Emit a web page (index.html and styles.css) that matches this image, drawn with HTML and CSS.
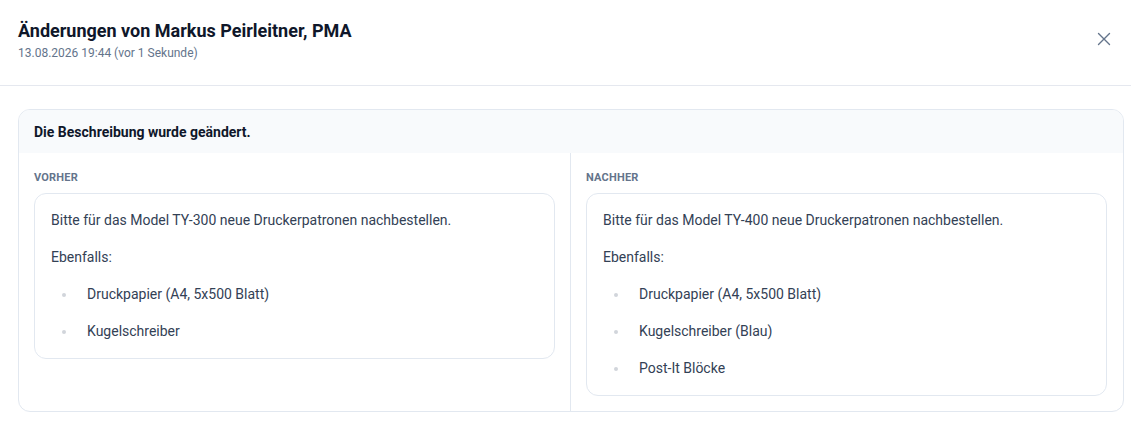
FILE: index.html
```html
<!DOCTYPE html>
<html lang="de">
<head>
<meta charset="utf-8">
<link rel="stylesheet" href="styles.css">
</head>
<body>
<div class="modal">
  <header class="modal-header">
    <div class="titles">
      <h1 class="title">Änderungen von Markus Peirleitner, PMA</h1>
      <div class="subtitle">13.08.2026 19:44 (vor 1 Sekunde)</div>
    </div>
    <button class="close" aria-label="Schließen">
      <svg width="14" height="14" viewBox="0 0 14 14" fill="none" stroke="currentColor" stroke-width="1.4" stroke-linecap="round"><path d="M1.5 1.5l11 11M12.5 1.5l-11 11"/></svg>
    </button>
  </header>
  <div class="modal-body">
    <section class="card">
      <div class="card-head">Die Beschreibung wurde geändert.</div>
      <div class="cols">
        <div class="col">
          <div class="label">Vorher</div>
          <div class="box">
            <p>Bitte für das Model TY-300 neue Druckerpatronen nachbestellen.</p>
            <p>Ebenfalls:</p>
            <ul>
              <li>Druckpapier (A4, 5x500 Blatt)</li>
              <li>Kugelschreiber</li>
            </ul>
          </div>
        </div>
        <div class="col col-right">
          <div class="label">Nachher</div>
          <div class="box">
            <p>Bitte für das Model TY-400 neue Druckerpatronen nachbestellen.</p>
            <p>Ebenfalls:</p>
            <ul>
              <li>Druckpapier (A4, 5x500 Blatt)</li>
              <li>Kugelschreiber (Blau)</li>
              <li>Post-It Blöcke</li>
            </ul>
          </div>
        </div>
      </div>
    </section>
  </div>
</div>
</body>
</html>
```
FILE: styles.css
```css
* { box-sizing: border-box; }
html, body { margin: 0; padding: 0; background: #ffffff; }
body {
  font-family: Roboto, "Liberation Sans", sans-serif;
  color: #0f172a;
}
.modal { width: 1131px; }
.modal-header {
  display: flex;
  justify-content: space-between;
  align-items: flex-start;
  padding: 19px 18px 24px 18px;
  border-bottom: 1px solid #e5e8ef;
}
.title {
  margin: 0;
  font-size: 18px;
  line-height: 24px;
  font-weight: 700;
  color: #0f172a;
}
.subtitle {
  margin-top: 2px;
  font-size: 12px;
  line-height: 16px;
  color: #64748b;
}
.close {
  border: 0;
  background: none;
  padding: 0;
  margin: 13px 2px 0 0;
  width: 14px;
  height: 14px;
  color: #64748b;
  display: flex;
  cursor: pointer;
}
.modal-body { padding: 23px 7px 12px 18px; }
.card {
  border: 1px solid #e2e8f0;
  border-radius: 12px;
  overflow: hidden;
}
.card-head {
  background: #f8fafc;
  padding: 12px 15px 11px;
  font-size: 14px;
  line-height: 20px;
  font-weight: 700;
  color: #0f172a;
}
.cols {
  display: grid;
  grid-template-columns: 551px 1fr;
}
.col { padding: 17px 15px 15px 15px; }
.col-right { border-left: 1px solid #e2e8f0; padding-right: 16px; }
.label {
  font-size: 11px;
  line-height: 16px;
  font-weight: 700;
  letter-spacing: 0.2px;
  text-transform: uppercase;
  color: #64748b;
  margin-bottom: 7px;
}
.box {
  border: 1px solid #e2e8f0;
  border-radius: 12px;
  padding: 16px 16px 16px 16px;
  font-size: 14px;
  line-height: 21px;
  color: #334155;
}
.box p { margin: 0 0 16px; }
.box ul { margin: 0; padding: 0 0 0 11px; list-style: none; }
.box li { display: flex; align-items: center; margin-top: 16px; }
.box li:first-child { margin-top: 0; }
.box li::before {
  content: "";
  width: 4px;
  height: 4px;
  border-radius: 50%;
  background: #d1d5db;
  margin-right: 21px;
  flex: none;
}
```
